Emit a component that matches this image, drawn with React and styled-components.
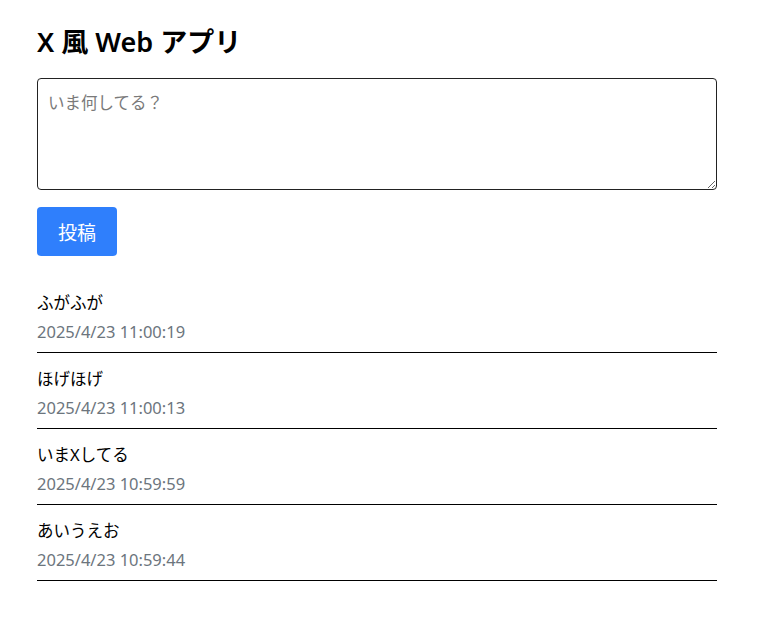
import styled, { createGlobalStyle } from "styled-components";

const GlobalStyle = createGlobalStyle`
    body {
        margin: 0;
        background: #fff;
        color: #000;
        font-family: "Noto Sans", "Noto Sans CJK JP", sans-serif;
    }
`

const posts = [
    { text: "ふがふが", date: "2025/4/23 11:00:19" },
    { text: "ほげほげ", date: "2025/4/23 11:00:13" },
    { text: "いまXしてる", date: "2025/4/23 10:59:59" },
    { text: "あいうえお", date: "2025/4/23 10:59:44" },
];

const App = () => {
    return (
        <>
            <GlobalStyle />
            <Container>
                <Title>X 風 Web アプリ</Title>
                <PostInput placeholder="いま何してる？" />
                <PostButton>投稿</PostButton>
                <PostList>
                    {posts.map((post, index) => (
                        <PostItem key={index}>
                            <PostText>{post.text}</PostText>
                            <PostDate>{post.date}</PostDate>
                        </PostItem>
                    ))}
                </PostList>
            </Container>
        </>
    );
};

export default App;

const Container = styled.div`
    width: 680px;
    padding: 24px 0 0 37px;
    display: flex;
    flex-direction: column;
    align-items: flex-start;
`

const Title = styled.h1`
    margin: 0 0 18px;
    font-size: 27px;
    line-height: 36px;
    font-weight: 600;
`

const PostInput = styled.textarea`
    box-sizing: border-box;
    width: 680px;
    height: 112px;
    padding: 12px 10px;
    border: 1px solid #222;
    border-radius: 4px;
    font-family: "Noto Sans", "Noto Sans CJK JP", sans-serif;
    font-size: 16.5px;
    line-height: 24px;
    resize: vertical;
    outline: none;

    &::placeholder {
        color: #7a7a7a;
    }
`

const PostButton = styled.button`
    margin-top: 17px;
    width: 80px;
    height: 49px;
    padding: 0;
    border: none;
    border-radius: 4px;
    background-color: #2f7ffc;
    color: #fff;
    font-family: "Noto Sans", "Noto Sans CJK JP", sans-serif;
    font-size: 19px;
    cursor: pointer;
`

const PostList = styled.ul`
    list-style: none;
    margin: 21px 0 0;
    padding: 0;
    width: 680px;
`

const PostItem = styled.li`
    padding: 14px 0 8px;
    border-bottom: 1px solid #000;
    display: flex;
    flex-direction: column;
    gap: 5px;
`

const PostText = styled.div`
    font-size: 16.5px;
    line-height: 24px;
`

const PostDate = styled.div`
    font-size: 16.5px;
    line-height: 24px;
    color: #6c757d;
`
